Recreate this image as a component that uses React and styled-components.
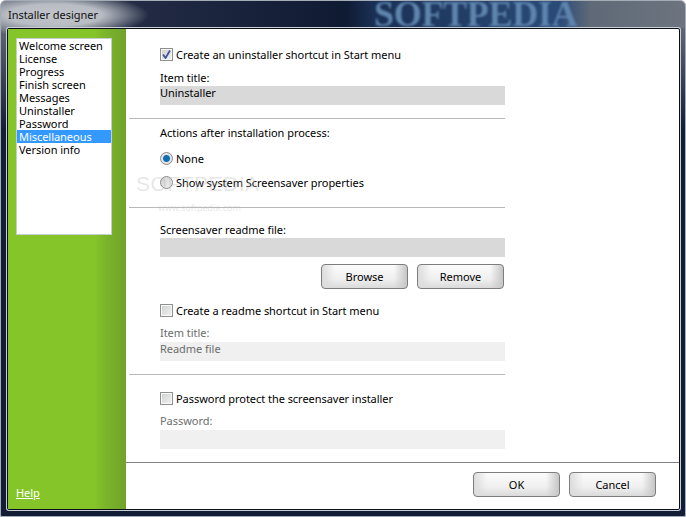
import styled, { createGlobalStyle } from "styled-components";

const GlobalStyle = createGlobalStyle`
  html, body { margin: 0; padding: 0; background: #fff; }
  body { font-family: "Noto Sans", "Open Sans", sans-serif; font-size: 11px; letter-spacing: -0.04px; color: #000; }
`;

const menuItems = [
  "Welcome screen", "License", "Progress", "Finish screen", "Messages",
  "Uninstaller", "Password", "Miscellaneous", "Version info",
];

const Check = ({ checked }) => (
  <CheckBox>
    {checked && (
      <svg width="9" height="9" viewBox="0 0 9 9">
        <path d="M1 4.5 L3.5 8 L8 0.5" fill="none" stroke="#42549a" strokeWidth="1.8" />
      </svg>
    )}
  </CheckBox>
);

const App = () => {
  return (
    <Window>
      <GlobalStyle />
      <TitleBar>
        <TitleText>Installer designer</TitleText>
        <TitleMark>SOFTPEDIA</TitleMark>
      </TitleBar>
      <Body>
        <Sidebar>
          <MenuList>
            {menuItems.map((item) => (
              <MenuItem key={item} $active={item === "Miscellaneous"}>{item}</MenuItem>
            ))}
          </MenuList>
          <HelpLink href="#">Help</HelpLink>
        </Sidebar>
        <Main>
          <Form>
            <Section $pad="17px" $height="90px">
              <OptionRow><Check checked />Create an uninstaller shortcut in Start menu</OptionRow>
              <FieldLabel $top="7px">Item title:</FieldLabel>
              <Field>Uninstaller</Field>
            </Section>
            <Section $pad="6px" $height="89px">
              <FieldLabel>Actions after installation process:</FieldLabel>
              <RadioRow $top="10px"><Radio $on />None</RadioRow>
              <RadioRow $top="8px"><Radio />Show system Screensaver properties</RadioRow>
            </Section>
            <Section $pad="14px" $height="167px">
              <FieldLabel>Screensaver readme file:</FieldLabel>
              <Field />
              <ButtonRow>
                <BevelButton>Browse</BevelButton>
                <BevelButton>Remove</BevelButton>
              </ButtonRow>
              <OptionRow $top="13px"><Check />Create a readme shortcut in Start menu</OptionRow>
              <FieldLabel $muted $top="6px">Item title:</FieldLabel>
              <Field $muted $gap="2px">Readme file</Field>
            </Section>
            <Section $pad="15px" $height="86px" $last>
              <OptionRow><Check />Password protect the screensaver installer</OptionRow>
              <FieldLabel $muted $top="6px">Password:</FieldLabel>
              <Field $muted $gap="2px" />
            </Section>
            <Watermark>
              <WatermarkTitle>SOFTPEDIA</WatermarkTitle>
              <WatermarkUrl>www.softpedia.com</WatermarkUrl>
            </Watermark>
          </Form>
          <Footer>
            <BevelButton>OK</BevelButton>
            <BevelButton>Cancel</BevelButton>
          </Footer>
        </Main>
      </Body>
    </Window>
  );
};

const Window = styled.div`
  width: 686px;
  height: 517px;
  box-sizing: border-box;
  padding: 0 6px 7px 7px;
  border-radius: 6px 6px 2px 2px;
  box-shadow: inset 0 0 0 1px #a4acb6;
  background:
    radial-gradient(ellipse 95px 22px at 54px 15px, #c2c6cb 0, #b8bcc3 50%, rgba(120, 126, 138, 0) 100%),
    linear-gradient(90deg, #5c6472 0, #232c44 130px, #0f1a33 345px, #1a3156 375px, #2a4b78 560px, #5f6977 590px, #6d747f 100%) 0 0 / 100% 28px no-repeat,
    linear-gradient(180deg, #5f6673 28px, #131d36 130px);
  display: flex;
  flex-direction: column;
  overflow: hidden;
`;

const TitleBar = styled.div`
  height: 28px;
  flex-shrink: 0;
  display: flex;
  align-items: center;
  position: relative;
`;

const TitleText = styled.div`
  color: #111;
  padding-left: 1px;
`;

const TitleMark = styled.div`
  position: absolute;
  left: 367px;
  top: 0;
  font-family: "Liberation Serif", serif;
  font-weight: bold;
  font-size: 36px;
  line-height: 28px;
  letter-spacing: -0.3px;
  color: #5f85ad;
  filter: blur(0.8px);
  white-space: nowrap;
`;

const Body = styled.div`
  flex: 1;
  display: flex;
  background: #fff;
  border: 1px solid #0c0f16;
  border-radius: 2px;
  box-shadow: 0 0 0 1px #c9d0d8;
  min-height: 0;
`;

const Sidebar = styled.div`
  width: 118px;
  flex-shrink: 0;
  box-sizing: border-box;
  padding: 9px 14px 9px 8px;
  background: linear-gradient(90deg, #86c52a 0, #86c52a 86px, #7ab42b 98px, #71a32b 100%);
  display: flex;
  flex-direction: column;
  justify-content: space-between;
`;

const MenuList = styled.div`
  height: 197px;
  box-sizing: border-box;
  background: #fff;
  border: 1px solid #c5ccd2;
`;

const MenuItem = styled.div`
  height: 13px;
  line-height: 13px;
  padding-left: 2px;
  color: ${(p) => (p.$active ? "#fff" : "#000")};
  background: ${(p) => (p.$active ? "#3399ff" : "transparent")};
  white-space: nowrap;
`;

const HelpLink = styled.a`
  color: #fff;
  text-decoration: underline;
  line-height: 15px;
`;

const Main = styled.div`
  flex: 1;
  min-width: 0;
  display: flex;
  flex-direction: column;
`;

const Form = styled.div`
  flex: 1;
  position: relative;
  box-sizing: border-box;
  padding-left: 3px;
  width: 379px;
`;

const Section = styled.div`
  box-sizing: border-box;
  height: ${(p) => p.$height};
  padding: ${(p) => p.$pad} 0 0 31px;
  border-bottom: ${(p) => (p.$last ? "none" : "1px solid #b9b9b9")};
`;

const OptionRow = styled.div`
  display: flex;
  align-items: center;
  gap: 3px;
  height: 17px;
  margin-top: ${(p) => p.$top || 0};
`;

const RadioRow = styled.div`
  display: flex;
  align-items: center;
  gap: 3px;
  height: 16px;
  margin-top: ${(p) => p.$top || 0};
`;

const CheckBox = styled.span`
  width: 11px;
  height: 11px;
  border: 1px solid #8e8f8f;
  box-shadow: inset 0 0 0 1px #f6f6f6;
  background: linear-gradient(135deg, #cfcfcf, #f2f2f2);
  display: flex;
  align-items: center;
  justify-content: center;
  flex-shrink: 0;
`;

const Radio = styled.span`
  width: 11px;
  height: 11px;
  border-radius: 50%;
  border: 1px solid #8a8a8a;
  background: ${(p) => (p.$on ? "radial-gradient(circle, #0f6fb5 0 3px, #e4e4e4 4px)" : "linear-gradient(135deg, #cfcfcf, #f5f5f5)")};
  flex-shrink: 0;
`;

const FieldLabel = styled.div`
  height: 15px;
  line-height: 15px;
  margin-top: ${(p) => p.$top || 0};
  color: ${(p) => (p.$muted ? "#6d6d6d" : "#000")};
`;

const Field = styled.div`
  width: 345px;
  height: 19px;
  line-height: 13px;
  margin-top: ${(p) => p.$gap || "1px"};
  background: ${(p) => (p.$muted ? "#f0f0f0" : "#d9d9d9")};
  color: ${(p) => (p.$muted ? "#6d6d6d" : "#000")};
`;

const ButtonRow = styled.div`
  width: 344px;
  display: flex;
  justify-content: flex-end;
  gap: 9px;
  margin-top: 7px;
`;

const BevelButton = styled.button`
  width: 87px;
  height: 25px;
  box-sizing: border-box;
  padding: 0;
  font: inherit;
  color: #000;
  border: 1px solid #7d7d7d;
  border-radius: 4px;
  background:
    linear-gradient(90deg, #dcdcdc 0, rgba(255, 255, 255, 0) 13px),
    linear-gradient(270deg, #c6c6c6 0, rgba(255, 255, 255, 0) 13px),
    linear-gradient(180deg, #fbfbfb 0, #f0f0f0 60%, #dadada 100%);
`;

const Watermark = styled.div`
  position: absolute;
  left: 10px;
  top: 144px;
  color: rgba(185, 185, 185, 0.35);
`;

const WatermarkTitle = styled.div`
  font-family: "Liberation Sans", sans-serif;
  font-size: 21px;
  line-height: 22px;
  letter-spacing: 0.5px;
`;

const WatermarkUrl = styled.div`
  font-size: 9px;
  line-height: 12px;
  margin-left: 22px;
  margin-top: 7px;
`;

const Footer = styled.div`
  height: 47px;
  box-sizing: border-box;
  border-top: 1px solid #7f7f7f;
  display: flex;
  justify-content: flex-end;
  align-items: flex-start;
  gap: 9px;
  padding: 9px 23px 0 0;
`;

export default App;
